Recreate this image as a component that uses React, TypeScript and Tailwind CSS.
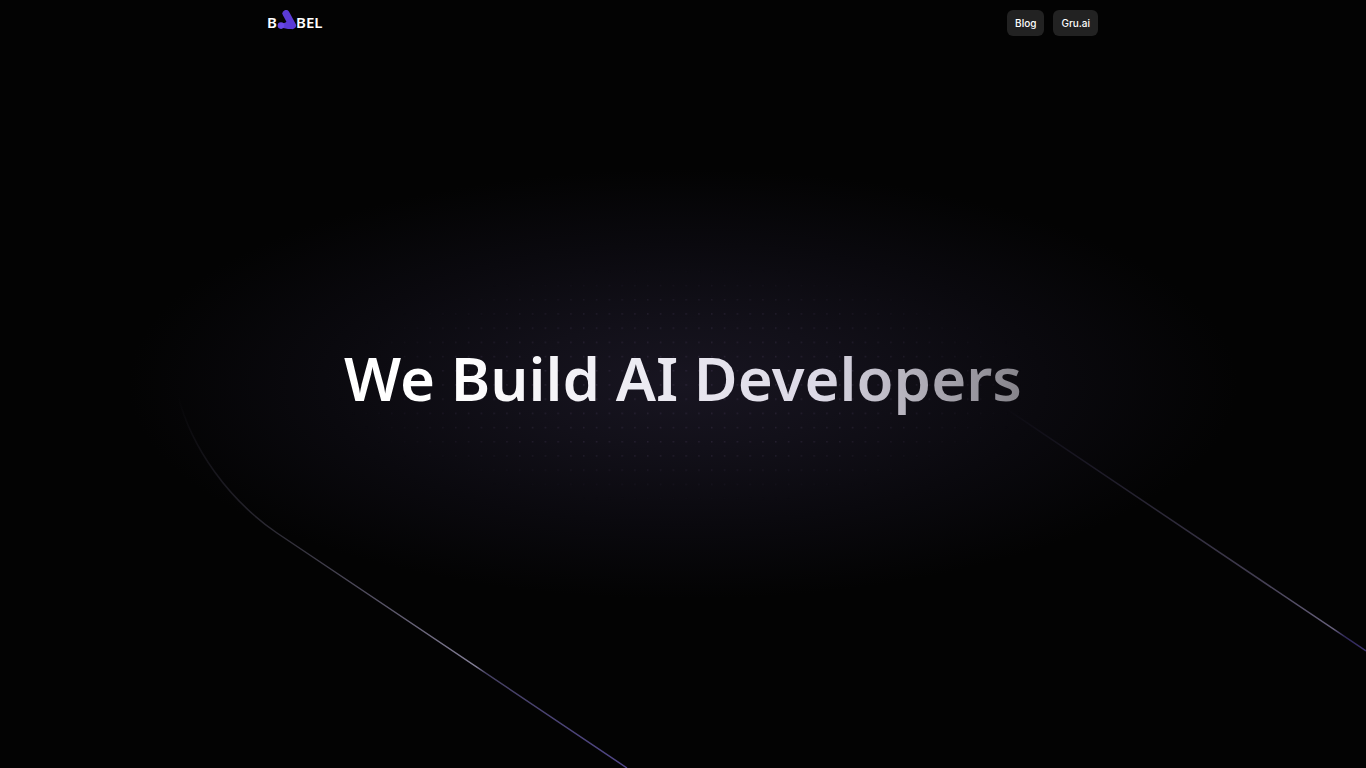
function Logo() {
  return (
    <a href="/" aria-label="Babel" className="-ml-0.5 block">
      <svg
        viewBox="-2 0 64 26"
        className="block h-[26px] w-16 font-['Noto_Sans',sans-serif] text-[15px] font-semibold"
        aria-hidden="true"
      >
        <path d="M18 3.500 24.500 15.500" stroke="#5b3bd6" strokeWidth="7" strokeLinecap="round" />
        <path d="M13 12.800c1.500.8 3 .7 4.500-.3l3.500-3 3 9.500h-4c-2.500 0-3.500-1.600-7-.6Z" fill="#5b3bd6" />
        <circle cx="13" cy="15.600" r="3.300" fill="#6847e6" />
        <text x="-1" y="18" fill="#fff">B</text>
        <text x="28" y="18" fill="#fff">BEL</text>
      </svg>
    </a>
  );
}

const links = [
  { label: "Blog", href: "#blog" },
  { label: "Gru.ai", href: "#gru" },
];

function Backdrop() {
  return (
    <svg
      viewBox="0 0 1366 768"
      preserveAspectRatio="xMidYMid slice"
      className="pointer-events-none absolute inset-0 h-full w-full"
      aria-hidden="true"
    >
      <defs>
        <radialGradient id="glow">
          <stop offset="0" stopColor="#181521" />
          <stop offset="0.3" stopColor="#121019" />
          <stop offset="0.65" stopColor="#0a090e" />
          <stop offset="1" stopColor="#030303" />
        </radialGradient>
        <radialGradient id="dotFade">
          <stop offset="0" stopColor="#fff" />
          <stop offset="0.6" stopColor="#fff" stopOpacity="0.7" />
          <stop offset="1" stopColor="#fff" stopOpacity="0" />
        </radialGradient>
        <pattern id="dots" x="583" y="299" width="12.800" height="14.200" patternUnits="userSpaceOnUse">
          <rect width="1.500" height="1.500" fill="#2c2538" />
        </pattern>
        <mask id="dotMask">
          <ellipse cx="683" cy="385" rx="350" ry="120" fill="url(#dotFade)" />
        </mask>
        <linearGradient id="trackLeft" gradientUnits="userSpaceOnUse" x1="178" y1="396" x2="627" y2="768">
          <stop offset="0" stopColor="#312e3e" stopOpacity="0" />
          <stop offset="0.3" stopColor="#302e38" />
          <stop offset="0.5" stopColor="#575366" />
          <stop offset="0.69" stopColor="#858098" />
          <stop offset="0.71" stopColor="#454061" />
          <stop offset="1" stopColor="#514789" />
        </linearGradient>
        <linearGradient id="trackRight" gradientUnits="userSpaceOnUse" x1="1005" y1="408" x2="1366" y2="651">
          <stop offset="0" stopColor="#28243b" stopOpacity="0" />
          <stop offset="0.35" stopColor="#24212f" />
          <stop offset="0.7" stopColor="#423d51" />
          <stop offset="0.91" stopColor="#68617d" />
          <stop offset="0.94" stopColor="#302958" />
          <stop offset="1" stopColor="#3c326d" />
        </linearGradient>
      </defs>
      <ellipse cx="683" cy="384" rx="555" ry="215" fill="url(#glow)" />
      <rect x="320" y="265" width="726" height="240" fill="url(#dots)" mask="url(#dotMask)" />
      <path d="M178 396C192 449 229 500 277 533L627 768" fill="none" stroke="url(#trackLeft)" strokeWidth="1.500" />
      <path d="M1005 408 1366 651" fill="none" stroke="url(#trackRight)" strokeWidth="1.500" />
    </svg>
  );
}

export default function App() {
  return (
    <div className="relative isolate flex min-h-screen flex-col overflow-hidden bg-[#030303]">
      <Backdrop />
      <header className="relative h-14 px-4 pt-[10px]">
        <div className="mx-auto flex max-w-[830px] items-start justify-between">
          <Logo />
          <nav aria-label="Main" className="flex gap-[9px]">
            {links.map((link) => (
              <a
                key={link.label}
                href={link.href}
                className="rounded-md bg-[#222222] px-2 py-[5px] font-['Inter',sans-serif] text-[10px] leading-4 font-medium text-white"
              >
                {link.label}
              </a>
            ))}
          </nav>
        </div>
      </header>
      <main className="relative flex flex-1 items-center justify-center px-4 pb-[68px]">
        <h1 className="bg-linear-to-r from-white from-15% via-[#dcd9e6] via-70% to-[#85838a] to-100% bg-clip-text text-center font-['Noto_Sans',sans-serif] text-[60px] leading-[80px] font-semibold text-transparent">
          We Build AI Developers
        </h1>
      </main>
    </div>
  );
}
